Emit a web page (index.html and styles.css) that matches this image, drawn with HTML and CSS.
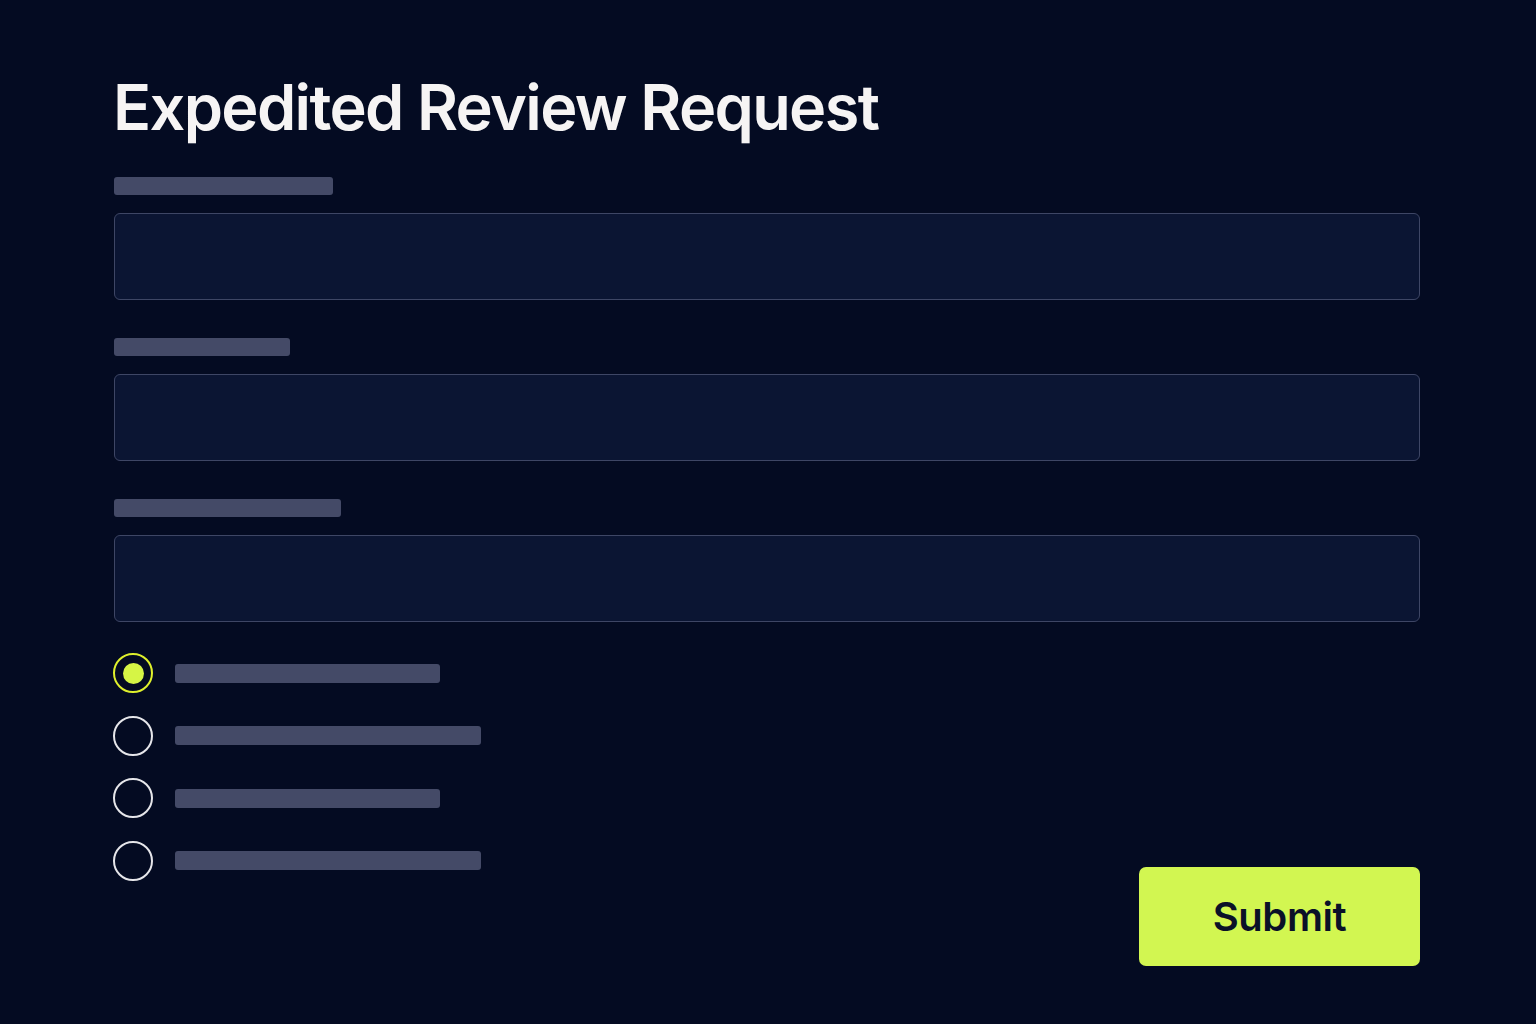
FILE: index.html
```html
<!DOCTYPE html>
<html lang="en">
<head>
<meta charset="utf-8">
<title>Expedited Review Request</title>
<link rel="stylesheet" href="styles.css">
</head>
<body>
<main class="page">
  <h1 class="title">Expedited Review Request</h1>
  <form class="form">
    <div class="field">
      <div class="label-bar" style="width:219px"></div>
      <div class="input"></div>
    </div>
    <div class="field">
      <div class="label-bar" style="width:176px"></div>
      <div class="input"></div>
    </div>
    <div class="field">
      <div class="label-bar" style="width:227px"></div>
      <div class="input"></div>
    </div>
    <div class="bottom">
      <div class="radios">
        <div class="radio-row">
          <span class="radio checked"><span class="dot"></span></span>
          <span class="radio-bar" style="width:265px"></span>
        </div>
        <div class="radio-row">
          <span class="radio"></span>
          <span class="radio-bar" style="width:306px"></span>
        </div>
        <div class="radio-row">
          <span class="radio"></span>
          <span class="radio-bar" style="width:265px"></span>
        </div>
        <div class="radio-row">
          <span class="radio"></span>
          <span class="radio-bar" style="width:306px"></span>
        </div>
      </div>
      <button type="button" class="submit">Submit</button>
    </div>
  </form>
</main>
</body>
</html>
```

FILE: styles.css
```css
* { box-sizing: border-box; }
html, body {
  margin: 0;
  padding: 0;
  background: #040b22;
  font-family: Inter, "Noto Sans", sans-serif;
}
.page {
  width: 1536px;
  height: 1024px;
  padding: 69px 116px 0 113px;
}
.title {
  margin: 0;
  color: #f6f4f4;
  font-size: 63px;
  font-weight: 600;
  line-height: 76px;
  letter-spacing: -1.65px;
}
.form {
  margin-top: 32px;
  margin-left: 1px;
  display: flex;
  flex-direction: column;
}
.field {
  display: flex;
  flex-direction: column;
  gap: 18px;
  margin-bottom: 38px;
}
.field:nth-child(3) { margin-bottom: 31px; }
.label-bar {
  height: 18px;
  border-radius: 3px;
  background: #444a67;
}
.input {
  height: 87px;
  border: 1.5px solid #3e4665;
  border-radius: 6px;
  background: #0b1533;
}
.bottom {
  display: flex;
  justify-content: space-between;
  align-items: flex-end;
}
.radios {
  display: flex;
  flex-direction: column;
  gap: 22.5px;
  margin-left: -1px;
}
.radio-row {
  display: flex;
  align-items: center;
  gap: 22px;
}
.radio {
  width: 40px;
  height: 40px;
  border-radius: 50%;
  border: 2px solid #e6e6ea;
  display: flex;
  align-items: center;
  justify-content: center;
}
.radio.checked { border-color: #dff02c; }
.dot {
  width: 21px;
  height: 21px;
  border-radius: 50%;
  background: #d6f545;
}
.radio-bar {
  height: 19px;
  border-radius: 3px;
  background: #444a67;
}
.submit {
  width: 281px;
  height: 99px;
  margin-bottom: -85px;
  border: none;
  border-radius: 7px;
  background: #d2f651;
  color: #0a1128;
  font-family: Inter, "Noto Sans", sans-serif;
  font-size: 40px;
  font-weight: 600;
  letter-spacing: -0.4px;
  cursor: pointer;
}
```
